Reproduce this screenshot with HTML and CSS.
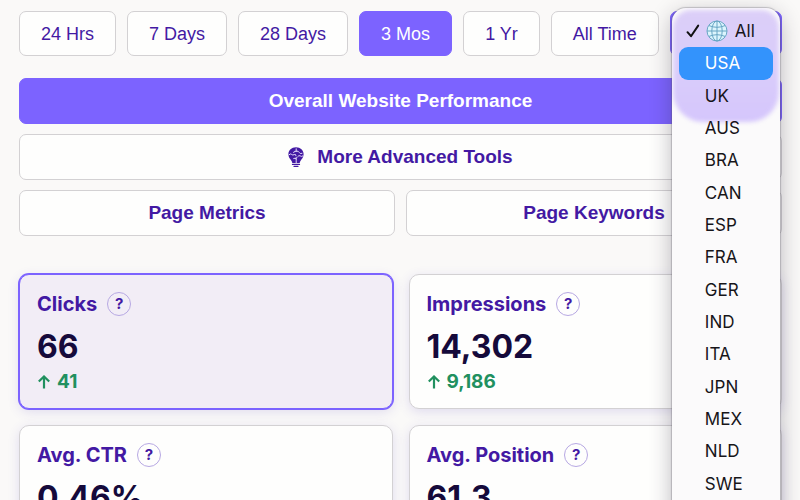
FILE: index.html
```html
<!DOCTYPE html>
<html lang="en">
<head>
<meta charset="utf-8">
<meta name="viewport" content="width=device-width, initial-scale=1">
<title>Website Performance</title>
<link rel="stylesheet" href="styles.css">
</head>
<body>
<main class="page">
  <div class="periods">
    <button type="button" class="btn">24 Hrs</button>
    <button type="button" class="btn">7 Days</button>
    <button type="button" class="btn">28 Days</button>
    <button type="button" class="btn btn-active">3 Mos</button>
    <button type="button" class="btn">1 Yr</button>
    <button type="button" class="btn">All Time</button>
    <div class="country">
      <button type="button" class="btn btn-active country-toggle" aria-label="Country" aria-haspopup="listbox" aria-expanded="true"></button>
      <div class="menu">
        <ul class="options" role="listbox" aria-label="Country">
          <li class="option" role="option" aria-selected="true">
            <svg class="check" viewBox="0 0 14 14" aria-hidden="true"><path d="M1.5 8.2 5 12.2 12.2 1.6"/></svg>
            <svg class="globe" viewBox="0 0 22 22" aria-hidden="true">
              <circle class="sea" cx="11" cy="11" r="10"/>
              <path d="M11 1v20M1 11h20M3 5.600q8 3.400 16 0M3 16.400q8-3.400 16 0"/>
              <ellipse cx="11" cy="11" rx="5.200" ry="10"/>
            </svg>
            All
          </li>
          <li class="option option-hover" role="option">USA</li>
          <li class="option" role="option">UK</li>
          <li class="option" role="option">AUS</li>
          <li class="option" role="option">BRA</li>
          <li class="option" role="option">CAN</li>
          <li class="option" role="option">ESP</li>
          <li class="option" role="option">FRA</li>
          <li class="option" role="option">GER</li>
          <li class="option" role="option">IND</li>
          <li class="option" role="option">ITA</li>
          <li class="option" role="option">JPN</li>
          <li class="option" role="option">MEX</li>
          <li class="option" role="option">NLD</li>
          <li class="option" role="option">SWE</li>
        </ul>
      </div>
    </div>
  </div>

  <div class="views">
    <button type="button" class="btn btn-view btn-active btn-wide">Overall Website Performance</button>
    <button type="button" class="btn btn-view btn-wide">
      <svg class="bulb" viewBox="0 0 16 20" aria-hidden="true">
        <path class="glass" d="M8 .3C3.600.3.4 3.400.4 7.300c0 3 1.700 4.600 3 6.500.5.8.7 1.400.9 2.200h7.400c.2-.8.4-1.400.9-2.200 1.300-1.900 3-3.500 3-6.500C15.600 3.400 12.400.3 8 .3Z"/>
        <path class="base" d="M4.500 17.400h7M6 19.300h4"/>
        <path class="folds" d="M8.200 1.800v2.400q-2.400-.4-2.600 1.400M1.200 7.600q1.200-1.400 2.400-.2t2.600.2q1.500-1 1.800 1M8.200 4.200q2.400-.6 3 1.200t2.800 1M14.800 9q-1.400 1-2.600-.1t-2.600.9M8.200 10.200v2.300M8.200 12q-1.200-1.400-2.500-.6M8.200 13.500v2.300"/>
      </svg>
      More Advanced Tools
    </button>
    <button type="button" class="btn btn-view">Page Metrics</button>
    <button type="button" class="btn btn-view">Page Keywords</button>
  </div>

  <div class="cards">
    <section class="card card-active">
      <header class="card-head"><h2>Clicks</h2><button type="button" class="help" aria-label="About clicks">?</button></header>
      <p class="value">66</p>
      <p class="change"><svg class="arrow" viewBox="0 0 14 14" aria-hidden="true"><path d="M7 13.500V1.500M1.800 6.500 7 1.500l5.200 5"/></svg>41</p>
    </section>
    <section class="card">
      <header class="card-head"><h2>Impressions</h2><button type="button" class="help" aria-label="About impressions">?</button></header>
      <p class="value">14,302</p>
      <p class="change"><svg class="arrow" viewBox="0 0 14 14" aria-hidden="true"><path d="M7 13.500V1.500M1.800 6.500 7 1.500l5.200 5"/></svg>9,186</p>
    </section>
    <section class="card">
      <header class="card-head"><h2>Avg. CTR</h2><button type="button" class="help" aria-label="About average CTR">?</button></header>
      <p class="value">0.46%</p>
    </section>
    <section class="card">
      <header class="card-head"><h2>Avg. Position</h2><button type="button" class="help" aria-label="About average position">?</button></header>
      <p class="value">61.3</p>
    </section>
  </div>
</main>
</body>
</html>
```

FILE: styles.css
```css
:root {
  --purple: #7c63ff;
  --ink: #4319a3;
  --line: #d3d1d3;
}

* {
  box-sizing: border-box;
}

body {
  margin: 0;
  height: 100vh;
  overflow: hidden;
  background: #faf9f8;
  color: var(--ink);
  font-family: Inter, "Liberation Sans", sans-serif;
}

.page {
  padding: 11px 18px 24px 19px;
}

.btn {
  min-height: 45px;
  padding: 0 21px;
  border: 1px solid var(--line);
  border-radius: 7px;
  background: #fefefd;
  color: var(--ink);
  font: 18px/24px "Liberation Sans", Arial, sans-serif;
  white-space: nowrap;
}

.btn-active {
  border-color: var(--purple);
  background: var(--purple);
  color: #fff;
}

.periods {
  display: flex;
  gap: 11px;
  margin-bottom: 22px;
}

.country {
  position: relative;
  flex: 1;
}

.country-toggle {
  display: block;
  width: 100%;
}

/* Open country list */
.menu {
  position: absolute;
  z-index: 2;
  top: -3px;
  left: 2px;
  right: 2px;
  padding: 7px 7px 24px;
  overflow: hidden;
  border-radius: 14px;
  background: #fbfafb;
  box-shadow: 0 0 1px 1px rgba(90, 85, 100, 0.3), 0 6px 22px rgba(40, 35, 50, 0.32);
}

.menu::before {
  content: "";
  position: absolute;
  top: 2px;
  left: 1px;
  right: 1px;
  height: 112px;
  border-radius: 18px 18px 30px 30px;
  background: linear-gradient(#dccff8, #d9ccfb 60%, #d5c6fc);
  filter: blur(2px);
}

.options {
  position: relative;
  display: grid;
  grid-auto-rows: 1fr;
  height: 485px;
  margin: 0;
  padding: 0;
  list-style: none;
}

.option {
  display: flex;
  align-items: center;
  padding-left: 26px;
  border-radius: 9px;
  color: #171519;
  font-size: 17px;
}

.option[aria-selected="true"] {
  padding-left: 7px;
}

.option-hover {
  background: #3393fc;
  color: #fff;
}

.check {
  width: 14px;
  height: 14px;
  margin-right: 6px;
  fill: none;
  stroke: #111;
  stroke-width: 2;
  stroke-linecap: round;
  stroke-linejoin: round;
}

.globe {
  width: 22px;
  height: 22px;
  margin-right: 7px;
  fill: none;
  stroke: #68a6c4;
  stroke-width: 1;
}

.globe .sea {
  fill: #dcf5fd;
}

.views {
  display: grid;
  grid-template-columns: 1fr 1fr;
  gap: 10px 11px;
  margin-bottom: 38px;
}

.btn-view {
  display: flex;
  align-items: center;
  justify-content: center;
  gap: 13px;
  min-height: 46px;
  font-size: 19px;
  font-weight: 700;
}

.btn-wide {
  grid-column: 1 / -1;
}

.bulb {
  width: 16px;
  height: 20px;
  fill: none;
}

.bulb .glass {
  fill: var(--ink);
}

.bulb .base {
  stroke: var(--ink);
  stroke-width: 1.3;
  stroke-linecap: round;
}

.bulb .folds {
  stroke: #e6dcfa;
  stroke-width: 1;
  stroke-linecap: round;
}

.cards {
  display: grid;
  grid-template-columns: 1fr 1fr;
  gap: 16px;
}

.card {
  min-height: 135px;
  padding: 17px 17px 15px;
  border: 1px solid var(--line);
  border-radius: 10px;
  background: #fefefd;
  box-shadow: 0 3px 12px rgba(90, 70, 190, 0.16);
}

.card-active {
  border-color: var(--purple);
  background: #f2edf6;
  box-shadow: 0 0 0 1px var(--purple), 0 3px 12px rgba(90, 70, 190, 0.16);
}

.card-head {
  display: flex;
  align-items: center;
  gap: 10px;
  margin-bottom: 11px;
}

.card-head h2 {
  margin: 0;
  font-size: 20px;
  line-height: 24px;
  font-weight: 700;
}

.help {
  width: 24px;
  height: 24px;
  padding: 0;
  border: 1px solid #b7a8e3;
  border-radius: 50%;
  background: transparent;
  color: var(--ink);
  font: 700 15px/22px Inter, sans-serif;
}

.value {
  margin: 0 0 4px;
  color: #150a3b;
  font-size: 32px;
  line-height: 40px;
  font-weight: 700;
}

.change {
  display: flex;
  align-items: center;
  gap: 6px;
  margin: 0;
  color: #21905f;
  font-size: 19px;
  line-height: 22px;
  font-weight: 700;
}

.arrow {
  width: 14px;
  height: 14px;
  fill: none;
  stroke: currentColor;
  stroke-width: 2.2;
}
```
